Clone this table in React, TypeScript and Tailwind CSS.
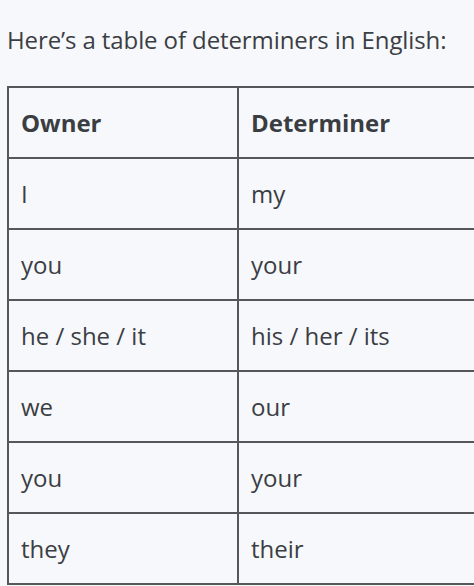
import React from "react";

const rows: [string, string][] = [
  ["I", "my"],
  ["you", "your"],
  ["he / she / it", "his / her / its"],
  ["we", "our"],
  ["you", "your"],
  ["they", "their"],
];

export default function App() {
  return (
    <div
      className="w-[474px] h-[586px] overflow-hidden bg-[#f7f8fc] text-[#3b3e43]"
      style={{ fontFamily: '"Open Sans", "Noto Sans", sans-serif' }}
    >
      <p className="pt-[24px] pl-[7px] text-[24px] leading-[32px] tracking-[-0.1px] whitespace-nowrap">
        Here’s a table of determiners in English:
      </p>
      <div className="mt-[30px] ml-[7px] w-[520px] border-l-2 border-t-2 border-[#555759]">
        <div className="flex h-[71px] border-b-2 border-[#555759]">
          <div className="w-[230px] shrink-0 border-r-2 border-[#555759] flex items-center pl-[12px] text-[24px] font-bold text-[#3a3d42]">
            Owner
          </div>
          <div className="flex-1 flex items-center pl-[12px] text-[24px] font-bold text-[#3a3d42]">
            Determiner
          </div>
        </div>
        {rows.map(([a, b], i) => (
          <div key={i} className="flex h-[71px] border-b-2 border-[#555759]">
            <div className="w-[230px] shrink-0 border-r-2 border-[#555759] flex items-center pl-[12px] text-[24px]">
              {a}
            </div>
            <div className="flex-1 flex items-center pl-[12px] text-[24px]">{b}</div>
          </div>
        ))}
      </div>
    </div>
  );
}
